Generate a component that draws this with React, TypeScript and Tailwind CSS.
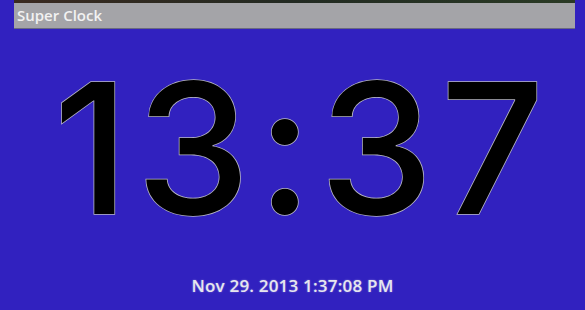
export default function App() {
  return (
    <div className="flex h-[310px] w-[585px] flex-col overflow-hidden bg-[#3121bf] font-['Open_Sans',sans-serif]">
      {/* title bar with a sliver of the thumbnail above it */}
      <div className="ml-[14px] mr-[10px] flex flex-col">
        <div className="h-[3px] bg-gradient-to-r from-[#3a2a20] via-[#222a22] to-[#2a3a25]" />
        <div className="flex h-[25px] items-center bg-[#a4a4a8] pl-[3px] shadow-[0_1px_0_#6a6a80]">
          <span className="text-[15px] font-semibold leading-none text-[#f2f2f2]">Super Clock</span>
        </div>
      </div>

      <div className="flex flex-1 flex-col items-center">
        <div className="mt-[45px] ml-[20px] font-['Inter',sans-serif] text-[182px] font-medium leading-[150px] tracking-[7px] text-black [-webkit-text-stroke:1.5px_#b8b8c4] [paint-order:stroke_fill]">
          13:37
        </div>
        <div className="mt-[54px] text-[17px] font-semibold leading-none tracking-[0.2px] text-[#e6e6ee] [text-shadow:0_0_2px_rgba(255,255,255,0.4)]">
          Nov 29. 2013 1:37:08 PM
        </div>
      </div>
    </div>
  );
}
